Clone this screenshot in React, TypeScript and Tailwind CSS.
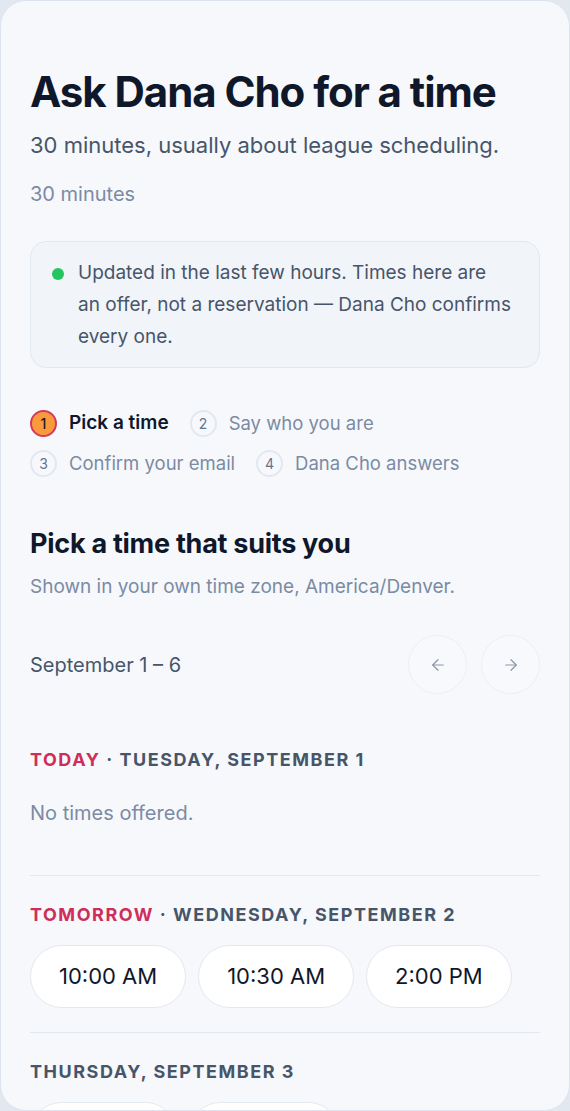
import React from 'react';

const steps = [
  { n: 1, label: 'Pick a time', active: true },
  { n: 2, label: 'Say who you are', active: false },
  { n: 3, label: 'Confirm your email', active: false },
  { n: 4, label: 'Dana Cho answers', active: false },
];

const days = [
  { tag: 'Today', label: 'Tuesday, September 1', times: [] as string[] },
  { tag: 'Tomorrow', label: 'Wednesday, September 2', times: ['10:00 AM', '10:30 AM', '2:00 PM'] },
  { tag: '', label: 'Thursday, September 3', times: ['9:00 AM', '11:30 AM'] },
];

const Arrow = ({ dir }: { dir: 'left' | 'right' }) => (
  <svg width="18" height="18" viewBox="0 0 24 24" fill="none" stroke="currentColor" strokeWidth="1.6" strokeLinecap="round" strokeLinejoin="round">
    {dir === 'left' ? (
      <>
        <path d="M19 12H5" />
        <path d="M12 19l-7-7 7-7" />
      </>
    ) : (
      <>
        <path d="M5 12h14" />
        <path d="M12 5l7 7-7 7" />
      </>
    )}
  </svg>
);

const App: React.FC = () => {
  return (
    <div className="h-[1111px] w-[570px] bg-[#e2e8f0] font-['Inter',sans-serif]">
      <div className="h-full overflow-hidden rounded-[26px] border border-[#dde4ee] bg-[#f6f8fc] px-[29px] pt-[68px]">
        <h1 className="text-[42px] font-bold leading-[1.1] tracking-[-0.025em] text-[#0f172a]">Ask Dana Cho for a time</h1>
        <p className="mt-[15px] text-[22px] leading-[30px] text-[#475569]">30 minutes, usually about league scheduling.</p>
        <p className="mt-[20px] text-[20px] leading-[28px] text-[#7b8ba3]">30 minutes</p>

        <div className="mt-[33px] flex gap-[14px] rounded-[16px] border border-[#e2e8f0] bg-[#f1f4f9] pt-[15px] pb-[14px] pl-[21px] pr-[27px]">
          <span className="mt-[11px] h-[12px] w-[12px] shrink-0 rounded-full bg-[#22c55e]" />
          <p className="text-[19px] leading-[32px] text-[#475569]">
            Updated in the last few hours. Times here are an offer, not a reservation — Dana Cho confirms every one.
          </p>
        </div>

        <ol className="mt-[41px] flex flex-wrap gap-x-[21px] gap-y-[12px]">
          {steps.map(s => (
            <li key={s.n} className="flex items-center gap-[12px]">
              <span
                className={
                  s.active
                    ? 'flex h-[27px] w-[27px] items-center justify-center rounded-full border-2 border-[#d23a5e] bg-[#fb9a3c] text-[14px] font-medium text-[#1c1917]'
                    : 'flex h-[27px] w-[27px] items-center justify-center rounded-full border-2 border-[#e2e8f0] text-[14px] text-[#64748b]'
                }
              >
                {s.n}
              </span>
              <span className={s.active ? 'text-[19px] font-semibold leading-[28px] text-[#0f172a]' : 'text-[18.5px] leading-[28px] text-[#7b8ba3]'}>
                {s.label}
              </span>
            </li>
          ))}
        </ol>

        <h2 className="mt-[50px] text-[27px] font-bold leading-[34px] tracking-[-0.01em] text-[#0f172a]">Pick a time that suits you</h2>
        <p className="mt-[13px] text-[19px] leading-[26px] text-[#7b8ba3]">Shown in your own time zone, America/Denver.</p>

        <div className="mt-[35px] flex items-center justify-between">
          <span className="text-[20px] text-[#475569]">September 1 – 6</span>
          <div className="flex gap-[14px]">
            <button className="flex h-[59px] w-[59px] items-center justify-center rounded-full border border-[#eceff5] bg-[#f8f9fc] text-[#8b95a7]">
              <Arrow dir="left" />
            </button>
            <button className="flex h-[59px] w-[59px] items-center justify-center rounded-full border border-[#eceff5] bg-[#f8f9fc] text-[#8b95a7]">
              <Arrow dir="right" />
            </button>
          </div>
        </div>

        <div className="mt-[53px]">
          {days.map((d, i) => (
            <section key={d.label} className={i > 0 ? 'border-t border-[#e2e8f0] pt-[26px] pb-[24px]' : 'pb-[48px]'}>
              <h3 className="text-[18px] font-bold uppercase leading-[26px] tracking-[0.085em] text-[#475569]">
                {d.tag && <span className="text-[#cf2d5a]">{d.tag}</span>}
                {d.tag && ' · '}
                {d.label}
              </h3>
              {d.times.length === 0 ? (
                <p className="mt-[26px] text-[20px] leading-[28px] text-[#7b8ba3]">No times offered.</p>
              ) : (
                <div className="mt-[17px] flex flex-wrap gap-[12px]">
                  {d.times.map(t => (
                    <button
                      key={t}
                      className="h-[63px] rounded-full border border-[#e2e8f0] bg-white px-[28px] text-[22px] text-[#0f172a]"
                    >
                      {t}
                    </button>
                  ))}
                </div>
              )}
            </section>
          ))}
        </div>
      </div>
    </div>
  );
};

export default App;
